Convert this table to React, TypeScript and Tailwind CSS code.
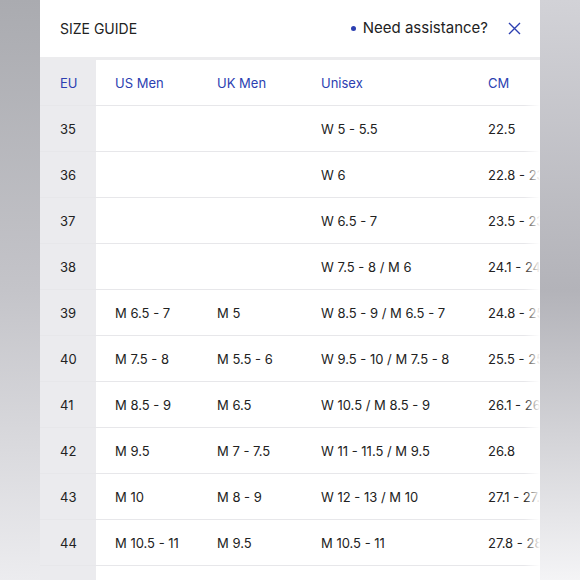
import React from 'react';

const rows = [
  { eu: '35', us: '', uk: '', unisex: 'W 5 - 5.5', cm: '22.5' },
  { eu: '36', us: '', uk: '', unisex: 'W 6', cm: '22.8 - 23.1' },
  { eu: '37', us: '', uk: '', unisex: 'W 6.5 - 7', cm: '23.5 - 23.8' },
  { eu: '38', us: '', uk: '', unisex: 'W 7.5 - 8 / M 6', cm: '24.1 - 24.5' },
  { eu: '39', us: 'M 6.5 - 7', uk: 'M 5', unisex: 'W 8.5 - 9 / M 6.5 - 7', cm: '24.8 - 25.1' },
  { eu: '40', us: 'M 7.5 - 8', uk: 'M 5.5 - 6', unisex: 'W 9.5 - 10 / M 7.5 - 8', cm: '25.5 - 25.8' },
  { eu: '41', us: 'M 8.5 - 9', uk: 'M 6.5', unisex: 'W 10.5 / M 8.5 - 9', cm: '26.1 - 26.5' },
  { eu: '42', us: 'M 9.5', uk: 'M 7 - 7.5', unisex: 'W 11 - 11.5 / M 9.5', cm: '26.8' },
  { eu: '43', us: 'M 10', uk: 'M 8 - 9', unisex: 'W 12 - 13 / M 10', cm: '27.1 - 27.5' },
  { eu: '44', us: 'M 10.5 - 11', uk: 'M 9.5', unisex: 'M 10.5 - 11', cm: '27.8 - 28.1' },
  { eu: '45', us: 'M 11.5', uk: 'M 10', unisex: 'M 11.5', cm: '28.5' },
];

const cols = 'grid grid-cols-[56px_102px_104px_167px_120px]';

export default function App() {
  return (
    <div className="w-[580px] h-[580px] overflow-hidden flex font-['Inter',sans-serif]">
      {/* backdrop left */}
      <div className="w-[40px] h-full bg-gradient-to-b from-[#aaabb0] via-[#c4c4c9] to-[#ececef]" />

      {/* sheet */}
      <div className="w-[500px] h-full bg-white flex flex-col">
        <div className="h-[57px] flex items-center justify-between pl-[20px] pr-[19px] shrink-0">
          <span className="text-[14px] text-[#222]">SIZE GUIDE</span>
          <div className="flex items-center">
            <span className="w-[5px] h-[5px] rounded-full bg-[#2c3fb1] mr-[7px]" />
            <span className="text-[15px] text-[#222]">Need assistance?</span>
            <svg className="ml-[20px]" width="13" height="13" viewBox="0 0 13 13" fill="none">
              <path d="M1 1L12 12M12 1L1 12" stroke="#2c3fb1" strokeWidth="1.4" />
            </svg>
          </div>
        </div>
        <div className="h-[3px] bg-[#ececee] shrink-0" />

        <div className="relative flex-1 overflow-hidden">
          <div className="w-[500px] overflow-hidden text-[13px]">
            <div className={`${cols} h-[46px] items-center border-b border-[#e7e7ea] text-[#2c3fb1] w-max`}>
              <div className="h-full flex items-center pl-[20px] pt-[2px] bg-[#ebebee]">EU</div>
              <div className="pl-[19px] pt-[2px]">US Men</div>
              <div className="pl-[19px] pt-[2px]">UK Men</div>
              <div className="pl-[19px] pt-[2px]">Unisex</div>
              <div className="pl-[19px] pt-[2px]">CM</div>
            </div>
            {rows.map((r) => (
              <div
                key={r.eu}
                className={`${cols} h-[46px] items-center border-b border-[#e7e7ea] text-[#222] whitespace-nowrap w-max`}
              >
                <div className="h-full flex items-center pl-[20px] pt-[2px] bg-[#ebebee]">{r.eu}</div>
                <div className="pl-[19px] pt-[2px]">{r.us}</div>
                <div className="pl-[19px] pt-[2px]">{r.uk}</div>
                <div className="pl-[19px] pt-[2px]">{r.unisex}</div>
                <div className="pl-[19px] pt-[2px]">{r.cm}</div>
              </div>
            ))}
          </div>
          {/* scroll fade */}
          <div className="absolute top-0 right-0 h-full w-[16px] bg-gradient-to-r from-white/0 to-white" />
        </div>
      </div>

      {/* backdrop right */}
      <div className="w-[40px] h-full bg-gradient-to-b from-[#d2d2d7] via-[#b3b3b9] to-[#f4f4f6]" />
    </div>
  );
}
